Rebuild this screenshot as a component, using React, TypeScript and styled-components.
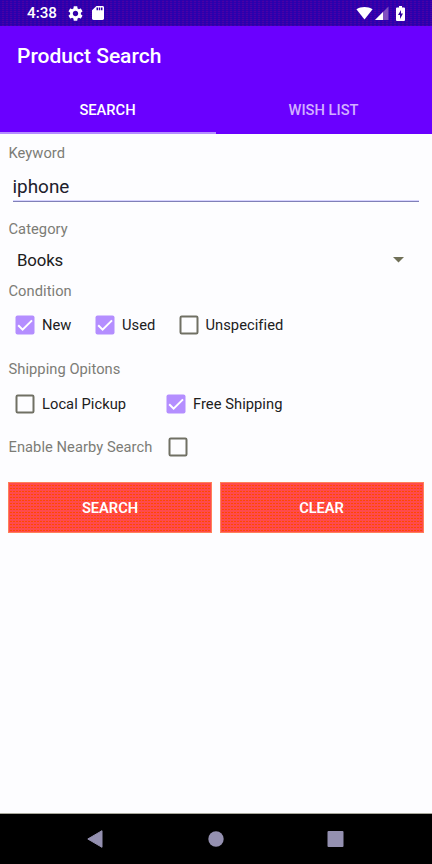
import React, { useState } from "react";
import styled, { createGlobalStyle } from "styled-components";

const GlobalStyle = createGlobalStyle`
  * { box-sizing: border-box; }
  body { margin: 0; background: #fdfdff; font-family: Roboto, sans-serif; }
`;

const Screen = styled.div`
  width: 432px;
  height: 864px;
  display: flex;
  flex-direction: column;
  background: #fdfdff;
  overflow: hidden;
`;

const StatusBar = styled.div`
  height: 26px;
  flex: none;
  display: flex;
  align-items: center;
  padding: 0 27px;
  color: #fff;
  background:
    repeating-linear-gradient(90deg, rgba(36, 0, 176, 0.7) 0 2px, transparent 2px 4px),
    repeating-linear-gradient(#3000a8 0 1px, #4800a8 1px 2px);
`;

const Clock = styled.span`
  font-size: 15.2px;
  font-weight: 500;
  line-height: 26px;
  width: 41px;
`;

const StatusIcon = styled.svg<{ $gap?: number }>`
  display: block;
  flex: none;
  margin-right: ${(p) => p.$gap ?? 0}px;
`;

const Spacer = styled.div`
  flex: 1;
`;

const AppBar = styled.header`
  height: 59px;
  flex: none;
  display: flex;
  align-items: center;
  padding-left: 17px;
  background: #6a00ff;
  color: #fff;
`;

const Title = styled.h1`
  margin: 0;
  font-size: 21px;
  font-weight: 500;
  line-height: 24px;
`;

const Tabs = styled.nav`
  height: 49px;
  flex: none;
  display: grid;
  grid-template-columns: 1fr 1fr;
  background: #6a00ff;
`;

const Tab = styled.button<{ $active: boolean }>`
  border: 0;
  border-bottom: 2px solid ${(p) => (p.$active ? "#b48eff" : "transparent")};
  padding: 2px 1px 0 0;
  background: none;
  font: 500 14.7px/20px Roboto, sans-serif;
  color: ${(p) => (p.$active ? "#fff" : "#d2b0ff")};
`;

const Form = styled.main`
  flex: 1;
  padding: 0 8.5px;
  display: flex;
  flex-direction: column;
`;

const Label = styled.div<{ $height: number; $drop?: number }>`
  height: ${(p) => p.$height}px;
  padding-top: ${(p) => p.$drop ?? 0}px;
  display: flex;
  align-items: center;
  font-size: 14.7px;
  letter-spacing: 0.05px;
  color: #7c7c76;
`;

const Field = styled.input`
  height: 30px;
  margin: 0 4.5px 0 4px;
  border: 0;
  border-bottom: 1px solid #8080b8;
  box-shadow: inset 0 -1px #d8d4ff;
  outline: 0;
  padding: 0;
  border-radius: 0;
  background: none;
  font: 400 18.9px/29px Roboto, sans-serif;
  color: #20202c;
`;

const Select = styled.div`
  height: 38px;
  display: flex;
  align-items: center;
  justify-content: space-between;
  padding: 0 19.5px 0 8.5px;
  font-size: 16.8px;
  letter-spacing: -0.15px;
  color: #20201c;
`;

const Row = styled.div<{ $height: number; $columns: string }>`
  height: ${(p) => p.$height}px;
  display: grid;
  grid-template-columns: ${(p) => p.$columns};
  align-items: center;
  padding-left: 6.5px;
`;

const Option = styled.label`
  display: flex;
  align-items: center;
  gap: 7px;
  font-size: 14.7px;
  letter-spacing: 0.05px;
  color: #20201c;
  white-space: nowrap;
`;

const NearbyRow = styled.div`
  height: 60px;
  display: grid;
  grid-template-columns: 159px auto;
  align-items: center;
`;

const HiddenInput = styled.input`
  display: none;
`;

const Actions = styled.div`
  display: grid;
  grid-template-columns: 204px 204px;
  justify-content: space-between;
  height: 51px;
  margin: 5px 0 0 -0.5px;
`;

const Action = styled.button`
  border: 1px solid #ff8058;
  padding: 1px 0 0;
  background:
    repeating-linear-gradient(90deg, #ff4a4c 0 1px, transparent 1px 3px),
    repeating-linear-gradient(#ff4a4c 0 2px, #ff4800 2px 3px);
  color: #fff;
  font: 600 14.7px/20px Roboto, sans-serif;
  letter-spacing: -0.05px;
`;

const NavBar = styled.footer`
  height: 51px;
  flex: none;
  border-top: 1px solid #a8a89c;
  background: #000;
  display: flex;
  align-items: center;
  justify-content: space-between;
  padding: 0 88px 0 87px;
`;

function Check({ label, initial = false }: { label?: string; initial?: boolean }) {
  const [on, setOn] = useState(initial);
  return (
    <Option>
      <HiddenInput type="checkbox" checked={on} onChange={() => setOn(!on)} />
      <svg width="20" height="20" viewBox="0 0 20 20">
        {on ? (
          <>
            <rect x="0.5" y="0.5" width="19" height="19" rx="2" fill="#b48eff" />
            <path d="M3.2 10.3 7.6 14.6 17 5.4" fill="none" stroke="#fff" strokeWidth="2" />
          </>
        ) : (
          <rect x="1.5" y="1.5" width="17" height="17" rx="1.2" fill="none" stroke="#707064" strokeWidth="2" />
        )}
      </svg>
      {label}
    </Option>
  );
}

export default function App() {
  const [tab, setTab] = useState(0);
  const [keyword, setKeyword] = useState("iphone");
  return (
    <Screen>
      <GlobalStyle />
      <StatusBar>
        <Clock>4:38</Clock>
        <StatusIcon $gap={9} width="15" height="15" viewBox="2 2 20 20" fill="#fff">
          <path d="M19.14 12.94c.04-.3.06-.61.06-.94 0-.32-.02-.64-.07-.94l2.03-1.58c.18-.14.23-.41.12-.61l-1.92-3.32c-.12-.22-.37-.29-.59-.22l-2.39.96c-.5-.38-1.03-.7-1.62-.94l-.36-2.54c-.04-.24-.24-.41-.48-.41h-3.84c-.24 0-.43.17-.47.41l-.36 2.54c-.59.24-1.13.57-1.62.94l-2.39-.96c-.22-.08-.47 0-.59.22L2.74 8.87c-.12.21-.08.47.12.61l2.03 1.58c-.05.3-.09.63-.09.94s.02.64.07.94l-2.03 1.58c-.18.14-.23.41-.12.61l1.92 3.32c.12.22.37.29.59.22l2.39-.96c.5.38 1.03.7 1.62.94l.36 2.54c.05.24.24.41.48.41h3.84c.24 0 .44-.17.47-.41l.36-2.54c.59-.24 1.13-.56 1.62-.94l2.39.96c.22.08.47 0 .59-.22l1.92-3.32c.12-.22.07-.47-.12-.61l-2.01-1.58zM12 15.6c-1.98 0-3.6-1.62-3.6-3.6s1.62-3.6 3.6-3.6 3.6 1.62 3.6 3.6-1.62 3.6-3.6 3.6z" />
        </StatusIcon>
        <StatusIcon width="12" height="14" viewBox="4 2 16 20" preserveAspectRatio="none" fill="#fff">
          <path d="M18 2h-8L4.02 8 4 20c0 1.1.9 2 2 2h12c1.1 0 2-.9 2-2V4c0-1.1-.9-2-2-2zm-6 6h-2V4h2v4zm3 0h-2V4h2v4zm3 0h-2V4h2v4z" />
        </StatusIcon>
        <Spacer />
        <StatusIcon $gap={2} width="17" height="14" viewBox="0 0 17 14">
          <path d="M.4 3.3C5 .1 12 .1 16.6 3.3L8.5 13.4Z" fill="#fff" />
        </StatusIcon>
        <StatusIcon $gap={7} width="14" height="14" viewBox="0 0 14 14">
          <path d="M13.5.5V14H0Z" fill="#8050c0" />
          <path d="M8 6V14H0Z" fill="#fff" />
        </StatusIcon>
        <StatusIcon width="9" height="15" viewBox="0 0 9 15">
          <path d="M3 0h3v1.5h2q1 0 1 1V14q0 1-1 1H1q-1 0-1-1V2.5q0-1 1-1h2z" fill="#fff" />
          <path d="M5 4v3.5h2L4 13V9H2z" fill="#3000a0" />
        </StatusIcon>
      </StatusBar>
      <AppBar>
        <Title>Product Search</Title>
      </AppBar>
      <Tabs>
        {["SEARCH", "WISH LIST"].map((name, i) => (
          <Tab key={name} $active={tab === i} onClick={() => setTab(i)}>
            {name}
          </Tab>
        ))}
      </Tabs>
      <Form>
        <Label $height={38}>Keyword</Label>
        <Field value={keyword} onChange={(e) => setKeyword(e.target.value)} />
        <Label $height={39} $drop={15}>Category</Label>
        <Select>
          Books
          <svg width="11" height="6" viewBox="0 0 11 6">
            <path d="M0 0H11L5.5 5.5Z" fill="#707058" />
          </svg>
        </Select>
        <Label $height={24}>Condition</Label>
        <Row $height={44} $columns="80px 83.5px auto">
          <Check label="New" initial />
          <Check label="Used" initial />
          <Check label="Unspecified" />
        </Row>
        <Label $height={43}>Shipping Opitons</Label>
        <Row $height={27} $columns="151px auto">
          <Check label="Local Pickup" />
          <Check label="Free Shipping" initial />
        </Row>
        <NearbyRow>
          <Label $height={20}>Enable Nearby Search</Label>
          <Check />
        </NearbyRow>
        <Actions>
          <Action>SEARCH</Action>
          <Action onClick={() => setKeyword("")}>CLEAR</Action>
        </Actions>
      </Form>
      <NavBar>
        <svg width="16" height="18" viewBox="0 0 16 18">
          <path d="M15 .7V17.3L.8 9Z" fill="#9490b0" stroke="#9490b0" strokeLinejoin="round" />
        </svg>
        <svg width="17" height="16" viewBox="0 0 17 16">
          <circle cx="9" cy="8" r="7.7" fill="#9490b0" />
        </svg>
        <svg width="17" height="16" viewBox="0 0 17 16">
          <rect x="0.5" width="16" height="16" rx="1" fill="#9490b0" />
        </svg>
      </NavBar>
    </Screen>
  );
}
